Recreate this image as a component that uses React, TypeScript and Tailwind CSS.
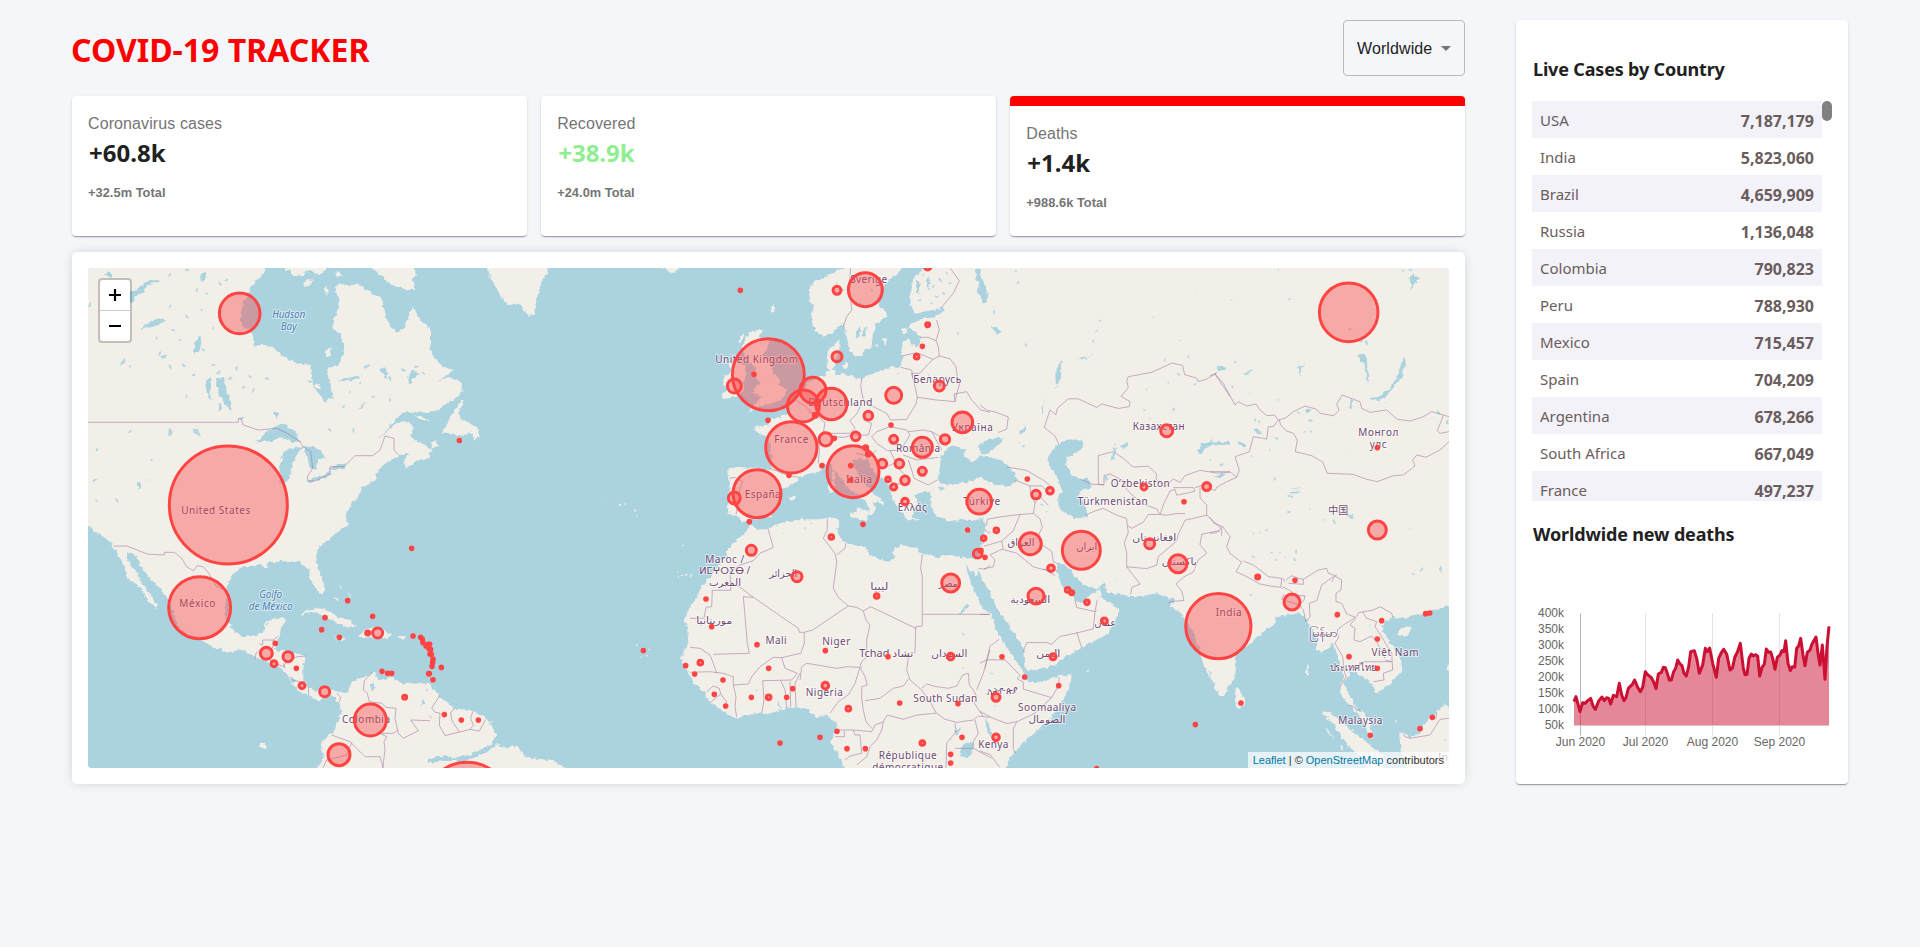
import React from "react";

const ui = "font-['Noto_Sans','Open_Sans',sans-serif]";
const arial = "font-['Liberation_Sans',Arial,sans-serif]";

/* ------------------------------------------------------------------ */
/* Map data: every sheet has its own origin and three units per pixel  */
/* ------------------------------------------------------------------ */

type Sheet = {
  x: number;
  y: number;
  sy: number;
  land: string[];
  water: string[];
  islands: string[];
  borders: string[];
  lakes: number[][];
  cases: number[][];
};

const northAmerica: Sheet = {
  x: 70,
  y: 250,
  sy: 1 / 3,
  land: ["0,0 1080,0 1080,812 0,812"],
  water: [
    "592,30 586,60 575,78 550,100 535,130 520,160 512,190 513,230 540,235 550,262 553,288 580,282 610,295 640,318 680,340 724,346 727,380 730,412 745,432 768,458 775,445 788,445 780,400 775,380 772,358 800,345 818,320 823,285 815,258 790,235 793,205 803,180 805,150 797,120 800,105 815,100 840,108 870,103 890,118 915,135 940,152 945,200 960,230 980,247 1005,230 1012,215 1020,185 1028,172 1040,190 1055,215 1085,240 1085,30",
    "920,570 950,540 985,500 1000,487 1040,485 1085,490 1085,598 1060,582 1040,577 1022,555 1030,535 1020,517 1000,514 980,522 955,540",
    "1085,622 1045,632 1012,650 1000,638 1020,612 985,615 970,625 940,645 922,665 915,690 880,710 862,740 840,770 828,790 830,815 1085,815",
    "556,577 590,545 600,540 625,525 650,520 660,535 680,545 690,575 672,576 650,570 630,560 610,575 580,572",
    "632,700 628,650 640,610 660,595 700,590 682,610 668,640 660,680 650,695",
    "700,588 735,592 755,605 768,625 745,625 736,660 720,655 712,625",
    "708,695 740,682 782,665 782,676 745,690 720,700",
    "778,656 800,646 828,640 826,653 790,661",
    "435,385 458,382 466,410 475,440 486,470 480,482 462,455 448,430 440,410",
    "408,390 420,380 424,410 418,425 428,450 420,452 412,420",
    "445,455 452,460 458,480 450,485",
    "178,125 195,122 215,105 240,90 262,88 270,95 245,100 228,115 212,132 195,140 186,158 178,155",
    "212,238 240,215 265,205 290,212 270,218 250,230",
    "372,285 390,255 396,270 390,300 372,308",
    "390,75 402,66 412,75 402,90 392,98",
    "105,72 115,64 128,75 118,82",
    "612,490 622,483 628,495 618,506",
    "200,700 208,695 216,710 210,717",
    "805,388 830,385 860,378 870,382 840,392 815,393",
    "930,360 945,352 955,370 948,385 938,375",
    "1012,390 1025,362 1048,370 1030,385 1024,400",
    "866,478 878,458 888,456 876,474",
  ],
  islands: [
    "640,30 645,62 660,62 672,78 700,75 705,60 735,66 750,76 778,50 780,30",
    "900,30 905,58 935,75 955,100 985,112 1020,120 1036,116 1026,92 1034,75 1030,30",
    "700,100 712,87 730,90 720,106 704,112",
    "762,112 772,105 776,125 768,135",
    "792,72 806,66 815,76 802,80",
    "925,35 945,70 975,80 990,60 980,35",
    "1002,640 1010,622 1040,605 1072,600 1060,622 1030,640 1010,652",
    "1036,496 1060,500 1076,512 1050,512",
    "728,408 745,402 755,412 740,418",
    "768,300 782,296 780,318 768,322",
  ],
  borders: [
    "54,517 505,517 505,505 513,506 520,525 565,540 620,535 655,552 690,575 700,590 722,605 728,655 712,680 714,692 735,693 780,672 780,650 822,650 855,617 908,617 930,600 945,558 960,562 972,565 972,600 985,614",
  ],
  lakes: [
    [352,60,6],[300,75,5],[380,120,5],[450,100,6],[410,130,4],[470,90,5],[300,170,5],[350,200,6],[310,240,5],[280,320,9],[270,310,6],[300,350,6],[340,345,6],[370,375,5],[160,335,9],[180,350,4],[400,300,5],[430,345,5],[445,368,7],[500,355,6],[540,380,5],[590,385,6],[520,412,5],[550,420,6],[350,440,4],[720,395,6],[890,350,8],[870,400,4],[960,385,7],[1000,360,6],[1040,350,6],[820,470,5],[850,540,6],[780,540,5],[910,440,5],[180,545,5],[300,548,11],[380,545,12],[245,630,4],[75,690,6],[80,600,5],[140,750,6],[80,752,4],[515,505,7],[60,165,6],[260,265,5],[275,215,5],[480,385,6],[840,425,4],[960,450,5],[1060,370,5],[230,690,3],[455,185,4],[430,235,4],[395,180,4],[330,270,4],
  ],
  cases: [[509,190,65],[475,765,181]],
};

const caribbean: Sheet = {
  x: 70,
  y: 520,
  sy: 1 / 3,
  land: [
    "0,-10 54,10 75,38 110,55 130,80 150,115 168,150 170,175 200,195 225,225 240,250 258,265 262,255 245,235 228,205 210,180 198,155 182,135 170,110 172,97 190,100 203,120 220,150 245,180 262,198 280,215 295,240 310,280 330,330 360,350 395,362 430,380 480,397 520,388 545,405 575,420 600,430 640,450 655,470 670,495 690,515 715,525 750,545 760,530 785,525 800,540 808,550 815,580 800,610 790,640 760,655 750,680 762,710 740,745 735,800 1082,800 1082,492 1050,490 1000,492 960,470 925,482 915,458 895,465 880,475 845,485 830,520 790,512 770,500 740,512 715,505 700,485 700,440 708,408 680,400 650,395 615,390 625,350 635,325 648,300 640,292 600,298 585,315 580,335 560,345 520,352 495,335 475,310 465,280 468,240 470,200 482,170 515,140 560,135 600,145 590,128 640,122 690,125 705,140 718,150 720,180 735,200 745,220 757,222 763,205 755,170 742,140 738,110 745,85 775,60 800,35 835,15 832,-10",
    "688,285 705,270 740,265 775,270 805,290 835,300 862,320 830,322 800,310 770,290 740,278 715,275 695,288",
    "862,350 882,330 915,322 945,333 965,345 940,355 900,352",
    "790,350 812,350 830,355 812,360",
    "983,348 1008,349 1004,357 985,356",
    "795,228 802,232 806,248 800,244",
    "808,195 815,203 812,210",
    "832,215 838,222 840,232",
    "568,672 582,672 588,684 575,686",
  ],
  water: ["900,495 910,488 918,500 910,516 901,508", "648,462 660,470 678,484 668,486", "1052,545 1060,538 1062,552 1054,555"],
  islands: [],
  borders: [
    "130,78 170,78 235,103 283,105 283,97 313,97 335,115 350,140 370,152 382,137 400,140 415,158 425,175 440,200 465,210",
    "568,372 578,374 578,360 610,360 625,348",
    "610,360 608,385",
    "555,418 558,400 575,385 608,388",
    "590,410 605,425 640,440 650,425 682,410 708,408",
    "645,445 640,430",
    "665,480 690,485",
    "715,500 716,525",
    "800,520 812,532 808,545",
    "905,458 883,482 880,510 892,520 898,545 935,550 948,562 978,565 975,595 985,640 1000,655 1045,632 1022,600 1080,602",
    "785,645 840,665 885,710 930,710 940,745",
    "930,640 950,650 942,665 945,690 938,745",
    "935,640 970,640 985,630",
    "758,745 770,720 830,705 845,668",
  ],
  lakes: [[110,150,2],[235,343,2],[600,680,3],[1070,510,4]],
  cases: [
    [389,263,97],[1025,85,8],[833,242,8],[765,293,8],[755,329,8],[808,352,8],[908,289,8],[893,339,10],[923,339,19],[1029,348,8],[1052,352,8],[1057,358,8],[1059,368,8],[1068,378,8],[1075,373,8],[1077,386,8],[1080,402,8],[616,370,8],[589,400,22],[654,410,19],[612,431,13],[679,445,8],[696,497,13],[764,515,19],[936,454,8],[953,460,8],[965,460,8],[1076,461,8],[1004,532,10],[901,600,52],[807,704,37],
  ],
};

const atlantic: Sheet = {
  x: 430,
  y: 250,
  sy: 540 / 1568,
  land: [
    "170,30 172,58 190,95 208,128 235,160 265,155 295,190 313,188 315,165 328,110 345,75 360,50 360,30",
    "690,30 697,52 720,65 735,66 750,52 752,30",
    "-4,275 10,310 35,335 70,350 50,362 25,382 60,370 95,380 98,410 80,430 50,445 25,465 -4,470",
    "95,435 75,460 60,490 38,530 70,533 100,540 125,530 133,555 140,540 150,548 142,515 115,500 90,490 85,475 102,437",
    "-4,590 10,575 28,572 18,552 -4,565",
    "-4,1262 25,1290 70,1333 120,1335 155,1350 180,1370 198,1410 180,1440 150,1465 200,1435 225,1445 260,1440 290,1475 330,1478 370,1482 405,1505 430,1550 -4,1550",
  ],
  water: ["-4,1480 30,1470 80,1476 130,1462 170,1440 185,1445 150,1466 110,1482 40,1484 -4,1490"],
  islands: [],
  borders: [
    "30,1293 5,1330 15,1342 30,1345 28,1380 45,1410 88,1400 65,1365 62,1342 72,1333",
    "128,1340 122,1360 130,1380 120,1392 88,1400",
    "167,1363 148,1397 120,1392",
    "-2,1352 5,1358",
  ],
  lakes: [[517,721,2],[570,740,4],[585,738,3],[615,756,4],[622,772,2],[760,858,3],[743,935,3],[745,950,3],[756,945,3],[768,943,4],[783,945,4],[620,1147,3],[658,1160,3],[650,1178,3],[633,1182,3]],
  cases: [
    [88,553,8],[-1,1145,8],[2,1160,8],[4,1174,8],[9,1188,8],[8,1198,8],[6,1209,8],[-2,1230,8],[9,1248,8],[34,1212,8],[43,1349,8],[94,1365,8],[145,1365,8],[111,1611,132],[640,1163,8],[767,1207,8],
  ],
};

const europe: Sheet = {
  x: 690,
  y: 250,
  sy: 1 / 3,
  land: [
    "200,240 218,240 208,262 238,272 230,300 218,312 242,345 256,375 270,390 268,405 292,420 275,450 240,462 205,470 175,487 185,470 200,455 218,440 190,430 195,410 210,400 195,380 200,350 180,340 165,320 158,290 168,262 182,248",
    "150,262 160,245 156,272 145,280",
    "245,172 252,165 252,180 246,192",
    "120,345 150,333 166,345 170,370 160,400 164,420 140,440 105,447 95,435 110,420 98,400 105,375 120,370",
    "470,30 462,54 430,68 400,85 375,95 358,122 360,150 372,170 362,200 368,225 380,247 400,257 425,250 442,235 458,220 465,235 468,265 478,300 495,318 515,318 525,300 545,290 548,255 556,222 592,200 588,185 568,170 562,140 575,112 600,88 625,70 640,30",
    "700,30 695,60 680,78 664,100 660,130 662,165 675,192 700,185 740,178 760,174 762,184 735,200 700,207 665,220 655,235 682,248 690,265 684,290 668,285 655,262 640,275 634,300 640,330 630,350 600,352 575,360 545,372 520,385 500,385 480,375 455,372 440,375 434,362 414,355 410,325 415,300 430,288 448,268 450,285 444,312 436,335 430,355 410,362 405,375 378,382 352,400 335,430 312,450 300,470 290,495 270,500 245,508 240,522 225,525 190,533 202,547 222,557 236,570 242,600 246,640 242,660 200,655 140,650 112,660 115,690 120,720 113,750 115,795 140,797 160,815 190,808 238,800 252,785 262,770 275,752 272,725 300,705 325,692 325,682 352,672 390,665 402,645 420,640 436,662 455,690 480,718 500,732 525,752 540,780 535,795 550,792 558,775 548,760 562,750 578,765 582,755 545,725 522,700 505,672 492,655 488,632 505,625 520,630 532,620 540,645 555,670 580,690 598,708 604,735 618,765 640,790 650,812 665,808 672,790 668,770 690,775 680,750 672,735 690,728 722,725 745,710 1000,715 1000,30",
    "480,790 510,784 538,784 530,812 505,806 482,800",
    "415,700 434,692 436,722 420,730",
    "426,668 434,660 436,688 428,690",
    "458,345 470,335 475,352 460,358",
    "556,286 564,282 562,292",
    "575,270 592,262 586,290",
    "636,240 650,232 655,245 640,256",
    "296,745 312,735 318,745 302,752",
    "735,712 722,730 720,750 728,775 740,800 900,815 900,690",
  ],
  water: [
    "750,650 752,618 775,592 800,588 830,602 820,615 845,637 872,622 910,627 950,646 975,671 982,692 960,708 920,702 870,680 835,697 790,705 750,700 745,678",
    "870,592 900,567 942,563 922,589 892,612 872,604",
    "855,54 870,60 868,82 885,100 893,130 888,158 872,145 862,122 872,112 858,85",
    "495,240 512,232 515,245 503,268 496,262",
    "520,238 530,230 526,255 518,262",
    "798,248 808,244 806,254",
    "712,80 722,100 718,120 708,100",
    "680,90 690,100 686,130 678,120",
    "742,715 758,712 762,718 748,722",
  ],
  islands: ["845,600 858,592 862,610 850,612"],
  borders: [
    "482,54 478,100 485,180 470,200 460,230",
    "780,54 808,92 790,130 752,175",
    "740,210 748,240 738,272 745,290 748,318",
    "690,262 715,262 738,272",
    "635,318 680,308 730,328 748,318",
    "748,318 780,326 798,350 802,380 812,392 800,430 795,455 740,450 682,442 675,410 665,370 690,370 712,345 730,328",
    "632,352 665,360 668,385",
    "515,385 512,410 520,450 550,470 590,490 602,510 650,508 678,462 682,442",
    "795,455 792,432 830,425 845,450 872,480 900,487",
    "480,512 500,492 515,460",
    "480,512 495,535 480,550 425,550 400,545",
    "355,485 385,500 405,518 400,548 385,560 388,600 385,640",
    "425,560 460,562 490,555 535,555 545,520 520,510",
    "545,560 560,545 600,530 650,540 660,555 632,600 592,602 560,580 545,560",
    "655,545 700,540 725,545 755,600",
    "640,615 680,630 745,622",
    "600,602 612,625 620,650 650,680 658,705",
    "655,630 665,660 672,685 715,705 742,690",
    "725,545 748,558 770,590",
    "240,655 290,675 325,682",
    "118,685 135,682 158,695 148,720 150,745 138,792",
    "320,452 345,468 370,490",
    "565,655 590,650 612,640",
    "500,610 540,620 560,600",
    "590,685 612,700 650,705",
  ],
  lakes: [[460,120,4],[510,160,4],[440,100,3],[545,120,4],[560,100,4],[690,150,5],[730,110,5],[750,90,6],[740,140,5],[725,160,4],[700,75,4],[770,70,4],[760,130,5],[780,100,4],[625,370,3],[715,378,3],[335,738,4],[285,755,3],[560,610,2],[705,760,4],[690,790,4],[712,785,4]],
  cases: [
    [151,121,8],[441,121,16],[526,119,55],[713,50,14],[713,224,10],[697,289,8],[680,320,11],[748,408,19],[235,374,112],[192,373,8],[133,408,25],[441,320,19],[369,421,43],[340,468,52],[424,462,51],[376,496,10],[611,436,28],[535,497,17],[603,525,8],[817,517,35],[765,568,18],[234,511,8],[304,592,81],[407,568,24],[433,565,8],[497,559,17],[611,568,16],[697,592,34],[527,593,10],[535,612,10],[577,641,17],[628,641,17],[697,664,16],[489,665,82],[482,647,8],[482,690,8],[396,647,8],[297,676,8],[594,688,11],[645,691,17],[611,711,13],[645,755,14],[201,731,76],[133,744,22],[868,755,41],
  ],
};

const africa: Sheet = {
  x: 690,
  y: 510,
  sy: 1 / 3,
  land: [
    "180,45 205,58 230,58 270,40 330,28 390,28 420,22 448,32 440,60 455,95 470,100 530,115 540,135 595,155 612,145 610,120 635,105 680,115 700,132 740,142 780,135 830,145 900,150 900,800 478,800 465,774 450,745 430,710 422,690 440,660 437,635 420,625 412,615 380,625 350,595 310,590 270,600 235,612 195,610 138,625 100,605 60,575 40,545 10,515 -10,480 -28,446 -5,400 -8,360 -18,325 -5,300 18,263 35,230 65,195 105,140 120,108 165,72",
    "733,-60 728,-20 738,0 752,20 770,30 800,35 830,20 855,22 888,28 890,50 878,90 868,130 850,158 900,165 900,-60",
    "820,62 845,55 838,68 824,68",
    "655,22 690,28 672,33",
    "500,-8 528,2 525,20 505,8",
  ],
  water: [
    "826,163 840,178 858,198 867,178 872,200 900,245 900,310 880,300 850,235 836,200",
    "812,712 830,695 850,697 848,722 832,745 814,735",
    "885,625 895,640 905,680 893,670",
    "792,662 810,655 806,668 795,680",
    "804,315 815,300 832,280 834,290 818,308",
    "262,570 270,580 276,600 268,590",
  ],
  islands: [],
  borders: [
    "235,58 242,85 250,112 210,130 190,152 150,165 120,185 122,241 67,241 65,290 48,292 42,325 0,325",
    "122,215 150,232 190,262 325,355 328,367 343,367 368,360 475,288 500,292 520,303",
    "190,262 160,260 172,400 178,430 70,433",
    "343,367 343,400 332,430 300,437 275,443",
    "412,25 412,60 400,85 435,130 440,155 430,235 445,262 475,288",
    "467,100 465,115 440,135",
    "697,132 692,175 697,200 697,313 900,313",
    "697,313 697,348 677,350 677,355 542,290 520,303",
    "520,303 528,330 540,345 530,390 530,440 515,455 510,470",
    "677,355 675,428 657,430 650,480 660,510",
    "330,510 335,470 350,460 400,468 440,475 470,470 510,472",
    "510,472 495,520 475,555 445,575 420,610",
    "510,472 525,500 532,525 515,530 515,565 520,600 528,635 545,655",
    "525,572 570,565 610,535 640,528 655,508",
    "660,510 695,540 720,575 738,608",
    "545,665 555,645 580,635 592,615 640,628 680,615 738,610",
    "738,608 765,628 800,637",
    "695,535 710,522 740,530 775,535 800,528 818,495 835,490 838,525 850,540 860,560",
    "860,540 880,490 900,420",
    "850,575 880,620 900,622",
    "800,637 850,630 865,618 880,620",
    "855,630 865,670 850,695 850,715 795,715",
    "795,640 798,665 770,700 768,774",
    "850,715 905,745",
    "440,660 490,660 545,665",
    "435,680 463,680 463,662",
    "490,660 495,675 510,675 515,730 480,738 465,750",
    "580,635 575,660 560,690 540,710 530,740 500,765",
    "0,412 30,415 60,435 68,455 80,490",
    "0,487 60,485 100,490 130,500 130,525 138,560 135,590 140,622",
    "130,525 175,522 185,500 210,470 250,442 275,443 285,475 322,490 305,510 218,512 222,570 215,610",
    "272,512 285,540 290,595",
    "300,515 302,590",
    "330,490 315,520 318,590",
    "50,545 70,528 88,535 92,552 60,578",
    "92,552 110,575 105,590",
    "865,175 885,178 900,165",
    "885,60 900,70",
  ],
  lakes: [[365,40,3],[280,70,2],[345,55,3],[820,372,4],[820,475,3],[200,540,3],[515,472,3],[345,520,2],[230,240,1],[780,265,2]],
  cases: [
    [178,35,8],[184,121,19],[424,81,11],[519,43,8],[833,60,8],[881,85,11],[863,131,17],[872,122,9],[885,142,8],[321,200,19],[48,267,8],[560,258,11],[782,219,31],[65,350,8],[201,404,8],[406,422,8],[594,440,8],[782,440,14],[31,458,11],[14,492,8],[236,475,8],[99,510,8],[406,527,14],[73,553,8],[184,562,8],[236,562,11],[290,562,8],[308,536,8],[107,588,8],[475,596,11],[629,579,8],[804,581,8],[441,664,8],[390,682,8],[270,699,8],[471,716,8],[526,716,8],[697,699,11],[816,682,8],[782,733,8],[782,759,8],
  ],
};

const centralAsia: Sheet = {
  x: 980,
  y: 250,
  sy: 540 / 1568,
  land: ["0,0 750,0 750,1560 0,1560"],
  water: [
    "-2,945 35,1005 50,1040 75,1070 100,1110 130,1155 133,1210 145,1222 200,1213 230,1200 260,1180 305,1155 350,1132 385,1115 395,1090 420,1050 402,1030 362,1010 360,982 350,990 330,1000 310,1022 285,1020 275,992 262,985 258,1000 240,960 228,930 232,905 258,918 285,945 305,968 350,985 372,965 378,990 410,998 450,1005 480,1005 530,997 560,1010 585,1015 570,1035 600,1050 620,1080 640,1110 655,1150 670,1200 690,1250 710,1290 725,1297 752,1275 752,1560 50,1560 75,1503 90,1475 120,1440 160,1405 200,1370 240,1325 268,1270 275,1235 235,1237 200,1248 160,1258 135,1248 140,1235 120,1210 95,1175 70,1140 45,1095 30,1040 15,1015 -2,990",
    "-2,775 12,780 15,810 8,850 -2,872",
    "-2,600 40,603 80,622 105,648 112,670 90,685 50,682 20,668 -2,655",
    "-2,568 30,548 72,544 52,568 22,592 -2,588",
    "235,565 260,550 305,550 312,570 290,590 262,600 258,620 272,650 300,665 325,662 335,690 305,697 298,715 318,745 322,775 290,780 255,765 235,745 235,715 248,700 240,680 220,640 200,608 215,585",
    "655,580 665,563 700,556 752,558 752,565 700,564 675,573 668,592 658,592",
    "395,610 400,580 412,570 406,590 400,612",
    "420,570 440,558 446,570 430,578",
    "370,665 382,655 388,665 376,674",
    "0,70 8,90 8,115 20,130 20,152 8,150 -2,125",
    "35,220 62,230 65,240 52,246",
    "118,532 135,510 140,520 125,535",
    "226,360 240,325 250,322 240,345 240,375 228,400",
    "185,470 192,430 188,480",
    "292,316 320,312 338,305 320,318",
    "572,465 585,458 582,470",
    "700,655 725,650 735,655 712,662",
    "712,345 735,338 742,345 720,352",
    "15,1330 20,1370 28,1392 20,1380",
  ],
  islands: ["310,1222 328,1221 325,1225"],
  borders: [
    "237,565 225,540 193,515 210,465 228,478 232,460 265,432 295,432 350,457 365,447 415,460 448,455 450,440 423,425 445,400 440,380 445,368 515,355 545,342 575,328 608,335 614,362 650,372 655,382 680,375 705,360 750,425",
    "0,450 20,465 45,470 85,485 80,520 55,530",
    "80,630 140,640 165,655 190,668 215,688",
    "105,668 150,685 185,685 200,700",
    "150,685 152,710 165,735 160,765 180,780 187,805 175,830 185,855 215,875 220,905 235,912",
    "165,735 180,715 205,742",
    "20,800 22,782 60,775 120,768 160,765",
    "120,768 100,815 65,845 30,855 12,860",
    "65,845 70,870 110,880 160,920 190,928 230,930",
    "12,925 40,920 45,900 30,885 68,868",
    "372,682 355,680 355,597 400,585 430,605 460,630 505,628 530,650 528,665 555,690 580,665 600,675 615,655 660,640 715,648 750,645",
    "300,665 335,680 372,682 372,655 390,650 430,670 440,695 460,715 495,740 530,752 538,765",
    "315,770 345,758 370,750 410,770 440,780 442,800 455,808 490,790 505,768 540,768 560,770 590,765 615,765",
    "442,800 445,820 433,850 440,880 440,920",
    "440,920 500,925 530,915 535,890 560,870 590,845 595,825 615,785 680,770",
    "440,920 460,945 480,970 455,980 452,1000",
    "565,1025 575,1020 612,1018 605,990 588,970 610,950 640,935 655,900 680,880 660,855 665,825 720,815",
    "540,768 552,735 570,700 585,695 590,712 625,705 645,700 640,690 600,690 580,690",
    "660,690 660,720 680,740 680,770 725,810 725,830",
    "645,690 680,680 695,690",
    "130,1165 140,1140 200,1140 215,1145 240,1122 290,1112 340,1100 345,1050 350,1045",
    "290,1110 305,1155",
    "285,1018 290,1038 345,1050 352,1015",
    "0,1058 28,1058",
    "15,1215 20,1190 30,1150 58,1130",
    "0,1200 20,1190 75,1190 100,1215 120,1235",
    "120,1235 112,1245 130,1255 130,1275 215,1300 165,1345 110,1370 80,1375 40,1360 0,1340",
    "215,1300 237,1262 237,1240",
    "110,1370 100,1390 100,1450 107,1460",
    "0,1455 30,1465 60,1503",
    "190,925 225,945",
  ],
  lakes: [[108,62,4],[115,95,5],[42,180,5],[137,275,5],[360,205,4],[350,235,4],[340,265,4],[520,195,3],[650,125,2],[600,263,3],[555,320,4],[625,310,4],[595,360,5],[645,390,4],[565,385,3],[500,405,3],[493,465,4],[510,490,3],[375,600,2],[405,565,3],[680,715,2],[225,400,3],[130,570,4],[118,560,3],[405,958,2],[35,1230,4],[45,1325,3],[510,940,2],[690,610,3],[185,740,4],[200,760,3]],
  cases: [
    [142,665,8],[168,710,17],[210,699,14],[49,814,11],[151,853,37],[213,924,14],[304,872,61],[263,987,11],[275,995,10],[321,1023,11],[168,1005,28],[373,1077,13],[219,1181,13],[66,1181,8],[134,1240,8],[236,1265,8],[48,1299,16],[48,1415,14],[646,1378,8],[350,1506,8],[492,688,13],[560,525,22],[680,687,16],[612,731,8],[509,853,19],[594,911,31],[715,1092,102],
  ],
};

const eastAsia: Sheet = {
  x: 1210,
  y: 250,
  sy: 1 / 3,
  land: ["0,0 780,0 780,812 0,812"],
  water: [
    "480,445 510,440 540,415 550,395 565,375 572,345 580,325 587,325 583,355 575,382 550,410 525,445 490,452",
    "418,475 422,450 430,450 426,478",
    "285,480 292,473 301,482 293,490",
    "0,574 30,578 60,574 60,582 30,585 0,580",
    "85,577 98,575 112,592 100,596",
    "14,680 28,672 48,674 30,684 16,684",
    "130,540 140,535 156,548 145,550",
    "95,378 125,355 130,358 108,375",
    "440,320 455,310 468,316 468,345 478,378 474,400 465,360 460,335 452,340 448,322",
    "595,88 605,80 615,70 628,90 612,98 606,118 600,95",
    "262,352 285,340 270,355 272,380 264,362",
    "20,352 40,350 38,360 25,362",
    "64,405 72,408 66,418",
    "245,715 275,712 260,716",
    "235,730 255,722 275,726 250,730",
    "228,742 248,736 245,740",
    "708,520 717,508 717,515 712,525",
    "412,795 425,795 430,805 415,802",
  ],
  islands: [],
  borders: [
    "0,378 20,368 15,372 40,400 75,465 85,455 110,468 138,462 150,480 170,497 193,495 205,510 225,505 250,485 285,468 320,478 330,490 372,497 387,480 380,462 397,435 450,455 455,475 480,487 530,480 562,508 600,513 640,500 665,485 717,500",
    "208,510 212,525 228,542 250,550 262,570 256,605 305,617 338,636 352,670 430,673 470,688 502,695 550,677 580,675 615,648 608,630 620,615 648,622 690,600 717,575",
    "700,497 682,542 690,550 717,545",
    "205,510 190,530 175,530 170,567 130,560 118,605 75,620 88,660 80,682 50,695 20,712 15,722 0,715",
    "0,665 60,665 80,682",
  ],
  lakes: [[65,150,3],[76,336,4],[205,450,3],[265,488,4],[302,512,6],[285,545,4],[302,545,4],[370,520,2],[200,565,5],[34,644,6],[195,687,5],[402,602,2],[428,678,2],[236,786,5],[300,776,3],[180,600,3],[125,618,3],[527,458,2],[238,148,4],[205,60,3],[685,488,6],[600,60,5],[580,62,4],[455,270,6],[470,278,6],[420,238,5],[120,430,2],[135,510,5],[148,515,4]],
  cases: [[416,187,92],[502,593,8]],
};

const southAsia: Sheet = {
  x: 1210,
  y: 510,
  sy: 1 / 3,
  land: ["0,0 780,0 780,800 0,800"],
  water: [
    "-2,480 10,520 30,560 40,558 58,530 75,502 78,470 74,440 100,415 130,392 160,365 192,345 198,322 225,316 270,310 285,322 300,350 320,375 318,420 340,427 358,410 368,400 380,430 390,470 402,500 390,530 395,560 408,572 430,600 455,625 465,650 475,672 490,685 486,665 478,635 465,610 435,590 420,560 408,540 400,515 415,500 420,482 435,488 460,500 482,518 500,550 540,520 572,490 575,450 545,405 520,365 515,345 530,330 548,322 580,325 640,312 690,295 780,262 780,805 -2,805",
  ],
  islands: [
    "565,365 585,350 603,350 600,370 580,382 565,375",
    "78,532 88,540 104,565 106,580 90,597 78,592 74,560",
    "336,603 370,612 410,650 450,680 480,705 520,735 525,805 490,805 450,745 420,710 395,680 370,640 340,615",
    "568,668 580,665 600,685 625,670 650,635 680,605 705,582 720,592 780,600 780,805 605,805 580,740 570,700",
    "292,465 297,470 292,500 288,495",
    "345,650 352,655 375,688 365,680",
    "390,705 400,715 402,722 392,715",
    "552,630 560,628 560,636",
    "713,462 720,458 720,482 713,480",
  ],
  borders: [
    "0,22 12,40 38,50 60,80 50,110 60,130 95,157",
    "0,70 20,68 38,50",
    "95,155 78,185 110,200 150,222 180,228 213,232 215,205 175,200 150,180 130,165 100,153",
    "228,210 245,197 265,205 280,208 280,223 235,220",
    "215,235 222,232 245,245 240,257 285,257 282,270 268,285 215,268 222,252",
    "268,285 280,300 288,335 300,320 298,280 320,272 335,225 370,200",
    "218,205 225,215",
    "280,208 325,180 350,175 355,190 370,195 395,210 393,240 378,250 378,275 395,280 410,312 437,322",
    "437,322 400,345 382,360 385,385 375,400 398,440 402,480 408,500 390,530",
    "437,325 420,345 435,355 432,390 450,395 485,378 500,395 515,425",
    "440,320 445,308 490,300 510,290 545,310 548,320",
    "458,305 470,325 500,335 495,350 510,372 545,430 548,480 520,490 522,510 490,515",
    "458,455 545,455 525,450",
    "415,585 430,588 440,602 450,598",
    "580,672 585,680 600,685 660,675 690,628 717,625",
    "672,628 678,625 680,605",
    "380,195 372,200 366,215",
  ],
  lakes: [[185,128,4],[210,128,3],[258,125,5],[254,148,5],[198,150,4],[170,60,4],[150,68,3],[130,70,3],[130,140,4],[225,142,3],[340,30,3],[372,35,6],[420,18,8],[600,55,2],[635,178,6],[692,178,7],[610,193,4],[122,255,4],[480,345,3],[365,672,3],[705,690,3]],
  cases: [[502,60,31],[143,201,10],[255,211,8],[246,276,28],[382,314,8],[515,332,8],[502,387,8],[417,440,8],[502,475,8],[647,311,8],[659,309,8],[93,579,8],[667,622,8],[630,656,8],[481,676,8]],
};

const sheets: Sheet[] = [northAmerica, caribbean, atlantic, europe, africa, centralAsia, eastAsia, southAsia];

const toPixels = (s: Sheet, points: string) =>
  points
    .split(" ")
    .map((p) => {
      const [x, y] = p.split(",").map(Number);
      return `${(s.x + x / 3).toFixed(1)},${(s.y + y * s.sy).toFixed(1)}`;
    })
    .join(" ");

const lakeShape = (s: Sheet, lake: number[], i: number) => {
  const [x, y, r] = lake;
  const turn = (i * 2.4) % 3.14;
  const pts: string[] = [];
  for (let k = 0; k < 7; k++) {
    const a = (k / 7) * Math.PI * 2;
    const wobble = 0.65 + (((i * 7 + k * 5) % 9) / 9) * 0.8;
    const px = Math.cos(a) * r * wobble * 1.3;
    const py = Math.sin(a) * r * wobble * 0.6;
    const qx = px * Math.cos(turn) - py * Math.sin(turn);
    const qy = px * Math.sin(turn) + py * Math.cos(turn);
    pts.push(`${(s.x + (x + qx) / 3).toFixed(1)},${(s.y + y * s.sy + qy / 3).toFixed(1)}`);
  }
  return pts.join(" ");
};

type Label = [string, number, number, number?];

// text, centre x, centre y, drawn width
const latinLabels: Label[] = [
  ["United States", 215.7, 510, 69],
  ["México", 197.3, 603.5, 36],
  ["Colombia", 366, 719, 48],
  ["United Kingdom", 756.7, 359.3, 83],
  ["Sverige", 868.7, 279.5, 37],
  ["Deutschland", 840.3, 402, 64],
  ["France", 791.3, 439.5, 34],
  ["España", 762.7, 494, 36],
  ["Italia", 859, 479.5, 26],
  ["România", 918, 448.5, 44],
  ["Беларусь", 937.3, 379.5, 48],
  ["Україна", 972.3, 427, 41],
  ["Ελλάς", 912.3, 507.5, 29],
  ["Türkiye", 981.7, 501, 37],
  ["Maroc /", 724.7, 559, 39],
  ["Mali", 776, 640.5, 21],
  ["Niger", 836.3, 641, 28],
  ["Nigeria", 824.3, 692, 37],
  ["South Sudan", 945.3, 698.5, 64],
  ["République", 907.7, 755, 58],
  ["démocratique", 907.7, 767.3, 71],
  ["Казахстан", 1158.7, 426.3, 52],
  ["O‘zbekiston", 1140.3, 483.5, 59],
  ["Türkmenistan", 1112.7, 501.5, 70],
  ["Soomaaliya", 1047, 707.5, 58],
  ["Kenya", 993.3, 744.5, 30],
  ["India", 1228.7, 612.3, 26],
  ["Монгол", 1378.3, 432.5, 40],
  ["улс", 1378.3, 444.5, 17],
  ["Việt Nam", 1395, 652.3, 47],
  ["Malaysia", 1360.3, 720.7, 44],
];

const otherLabels: Label[] = [
  ["ⵍⵎⵖⵔⵉⴱ /", 724.7, 571, 51],
  ["المغرب", 725, 583, 32],
  ["الجزائر", 783.3, 574, 28],
  ["موريتانيا", 714.3, 621, 36],
  ["ليبيا", 879.3, 586.5, 18],
  ["مصر", 948.3, 583.5, 19],
  ["Tchad تشاد", 886.3, 653.5, 54],
  ["السودان", 949.3, 654, 36],
  ["ايران", 1086.7, 547, 21],
  ["العراق", 1021, 542.5, 27],
  ["افغانستان", 1154.3, 538, 44],
  ["پاکستان", 1179.3, 562, 35],
  ["السعودية", 1030.3, 600, 40],
  ["عمان", 1105.3, 623, 22],
  ["اليمن", 1048.3, 653.5, 24],
  ["ኢትዮጵያ", 1002, 691, 31],
  ["الصومال", 1047, 720, 37],
  ["中国", 1338.3, 511, 20],
  ["မြန်မာ", 1323.3, 634, 28],
  ["ประเทศไทย", 1353.3, 668, 47],
  ["In", 1443, 757.5, 10],
];

const WorldMap = () => (
  <svg viewBox="88 268 1361 500" className="block h-full w-full">
    <defs>
      <filter id="coast" x="0" y="0" width="1" height="1" colorInterpolationFilters="sRGB">
        <feTurbulence type="fractalNoise" baseFrequency="0.22" numOctaves="2" seed="4" result="n" />
        <feDisplacementMap in="SourceGraphic" in2="n" scale="5" xChannelSelector="R" yChannelSelector="G" />
      </filter>
    </defs>
    <rect x="60" y="240" width="1420" height="560" fill="#aad3df" />
    <g filter="url(#coast)">
      <rect x="60" y="240" width="1420" height="560" fill="#aad3df" />
      {sheets.map((s) => s.land.map((p) => <polygon key={p} points={toPixels(s, p)} fill="#f2efe9" />))}
      {sheets.map((s) => s.water.map((p) => <polygon key={p} points={toPixels(s, p)} fill="#aad3df" />))}
      {sheets.map((s) => s.islands.map((p) => <polygon key={p} points={toPixels(s, p)} fill="#f2efe9" />))}
    </g>
    {sheets.map((s) =>
      s.lakes.map((l, i) => (
        <polygon key={`${s.x}-${s.y}-${i}`} points={lakeShape(s, l, i)} fill={s === atlantic ? "#f2efe9" : "#b4d8e1"} />
      ))
    )}
    <g fill="none" stroke="#9d76a0" strokeOpacity="0.62" strokeWidth="0.9" strokeLinejoin="round">
      {sheets.map((s) => s.borders.map((p) => <polyline key={p} points={toPixels(s, p)} />))}
    </g>
    <g
      textAnchor="middle"
      fill="#6f4a72"
      stroke="#ffffff"
      strokeOpacity="0.6"
      strokeWidth="2"
      strokeLinejoin="round"
      paintOrder="stroke"
      fontSize="10"
    >
      <g fontFamily="'Noto Sans', sans-serif">
        {latinLabels.map(([t, x, y, w]) => (
          <text key={t} x={x} y={y + 3.6} textLength={w}>
            {t}
          </text>
        ))}
      </g>
      <g fontFamily="'Noto Sans', 'DejaVu Sans', 'Noto Sans CJK SC', sans-serif">
        {otherLabels.map(([t, x, y, w]) => (
          <text key={t} x={x} y={y + 3.2} textLength={w} lengthAdjust="spacingAndGlyphs">
            {t}
          </text>
        ))}
      </g>
      <g fontFamily="'Noto Sans', sans-serif" fontStyle="italic" fill="#4f7fb5" strokeOpacity="0.5">
        <text x="288.7" y="317.5" textLength="33">Hudson</text>
        <text x="288.7" y="329.5" textLength="16">Bay</text>
        <text x="270.7" y="598.3" textLength="23">Golfo</text>
        <text x="270.7" y="610.2" textLength="44">de México</text>
      </g>
    </g>
    <g fill="#fb4443" fillOpacity="0.4" stroke="#ff4443" strokeWidth="3">
      {sheets.map((s) =>
        s.cases.map(([x, y, r], i) => (
          <circle key={`${s.x}-${s.y}-${i}`} cx={s.x + x / 3} cy={s.y + y * s.sy} r={Math.max(r / 3 - 1.35, 1.25)} />
        ))
      )}
    </g>
  </svg>
);

/* ------------------------------------------------------------------ */
/* Line chart                                                          */
/* ------------------------------------------------------------------ */

const history =
  "222,905 228,890 240,935 248,908 256,910 264,901 272,895 279,918 286,928 296,903 306,891 313,902 320,893 326,895 332,912 340,886 350,890 358,850 365,885 372,902 378,893 385,865 397,853 404,840 413,862 421,875 428,862 436,815 442,823 454,833 462,848 468,866 475,822 484,817 490,802 496,803 502,820 508,840 514,840 521,815 527,805 533,780 540,792 546,797 552,820 559,828 566,800 572,755 583,752 590,775 598,820 608,795 616,745 622,755 629,744 638,790 649,832 656,775 664,758 671,748 680,762 690,810 697,805 705,770 712,757 721,730 730,805 735,824 741,823 747,775 754,762 760,768 767,764 773,768 779,828 786,803 793,792 799,747 806,757 812,756 818,775 825,808 832,772 840,765 846,752 852,755 857,722 864,790 871,812 877,800 884,802 890,745 896,738 902,715 909,765 915,797 922,757 930,750 936,732 948,711 954,760 960,795 967,735 975,838 981,740 987,679";

const Chart = () => {
  const pts = history.split(" ").map((p) => p.split(",").map(Number));
  const line = pts.map(([x, y]) => `${((x - 96) / 3).toFixed(2)},${((y - 600) / 3).toFixed(2)}`).join(" ");
  const months: [string, number][] = [
    ["Jun 2020", 48.5],
    ["Jul 2020", 113.5],
    ["Aug 2020", 180.5],
    ["Sep 2020", 247.5],
  ];
  return (
    <svg viewBox="0 0 300 150" className="block h-[150px] w-[300px] overflow-visible">
      {months.map(([m, x], i) => (
        <line key={m} x1={x} x2={x} y1="13.5" y2="135.5" stroke={i === 0 ? "#b5b5b5" : "#e3e3e3"} />
      ))}
      <line x1="42" x2="297" y1="125.5" y2="125.5" stroke="#e0e0e0" />
      <polygon points={`42,125.3 ${line} 297,125.3`} fill="rgba(204,16,52,0.5)" />
      <polyline points={line} fill="none" stroke="#cc1034" strokeWidth="3" strokeLinejoin="round" />
      <g fontFamily="'Liberation Sans', Arial, sans-serif" fontSize="12" fill="#666666">
        {["400k", "350k", "300k", "250k", "200k", "150k", "100k", "50k"].map((t, i) => (
          <text key={t} x="32" y={17 + i * 16} textAnchor="end">
            {t}
          </text>
        ))}
        {months.map(([m, x]) => (
          <text key={m} x={x} y="146" textAnchor="middle">
            {m}
          </text>
        ))}
      </g>
    </svg>
  );
};

/* ------------------------------------------------------------------ */

const paper =
  "rounded bg-white shadow-[0_2px_1px_-1px_rgba(0,0,0,0.2),0_1px_1px_0_rgba(0,0,0,0.14),0_1px_3px_0_rgba(0,0,0,0.12)]";

const countries: [string, string][] = [
  ["USA", "7,187,179"],
  ["India", "5,823,060"],
  ["Brazil", "4,659,909"],
  ["Russia", "1,136,048"],
  ["Colombia", "790,823"],
  ["Peru", "788,930"],
  ["Mexico", "715,457"],
  ["Spain", "704,209"],
  ["Argentina", "678,266"],
  ["South Africa", "667,049"],
  ["France", "497,237"],
];

const InfoBox = ({ title, cases, total, green, active }: { title: string; cases: string; total: string; green?: boolean; active?: boolean }) => (
  <div className={`${paper} h-[140px] flex-1 overflow-hidden ${active ? "border-t-[10px] border-[#ff0000]" : ""}`}>
    <div className="px-4 pt-4">
      <p className={`${arial} text-[16px] leading-6 tracking-[0.1px] text-[#757575]`}>{title}</p>
      <h2 className={`${ui} pl-px pt-px text-[24px] font-bold leading-8 ${green ? "text-[#90ee90]" : "text-[#212121]"}`}>{cases}</h2>
      <p className={`${arial} mt-3 text-[12.8px] font-bold leading-6 tracking-[0.05px] text-[#757575]`}>{total}</p>
    </div>
  </div>
);

export default function App() {
  return (
    <div className="flex h-[947px] items-start bg-[#f5f6fa] pl-[72px] pt-5">
      <div className="w-[1393px]">
        <div className="mb-5 flex h-14 items-center justify-between">
          <h1 className={`${ui} -ml-px pt-1 text-[32px] font-bold text-[#ff0000]`}>COVID-19 TRACKER</h1>
          <div className={`${arial} flex h-14 w-[122px] items-center justify-between rounded border border-[#babbbe] px-[13px] text-[16px] text-[#212121]`}>
            <span className="pt-0.5 tracking-[0.1px]">Worldwide</span>
            <svg width="10" height="5" viewBox="0 0 10 5">
              <path d="M0 0h10L5 5z" fill="#757575" />
            </svg>
          </div>
        </div>

        <div className="flex gap-[14.5px]">
          <InfoBox title="Coronavirus cases" cases="+60.8k" total="+32.5m Total" />
          <InfoBox title="Recovered" cases="+38.9k" total="+24.0m Total" green />
          <InfoBox title="Deaths" cases="+1.4k" total="+988.6k Total" active />
        </div>

        <div className="mt-4 h-[532px] rounded-[5px] bg-white p-4 shadow-[0_0_12px_-2px_rgba(0,0,0,0.2)]">
          <div className="relative h-[500px] w-[1361px] overflow-hidden rounded">
            <WorldMap />
            <div className="absolute left-2.5 top-2.5 flex flex-col rounded border-2 border-black/20 bg-clip-padding">
              <div className="flex h-[31px] w-[30px] items-center justify-center rounded-t-sm border-b border-[#cccccc] bg-white">
                <svg width="12" height="12" viewBox="0 0 12 12">
                  <path d="M6 0v12M0 6h12" stroke="#000" strokeWidth="2.2" />
                </svg>
              </div>
              <div className="flex h-[30px] w-[30px] items-center justify-center rounded-b-sm bg-white">
                <svg width="12" height="12" viewBox="0 0 12 12">
                  <path d="M0 6h12" stroke="#000" strokeWidth="2.2" />
                </svg>
              </div>
            </div>
            <div className={`${arial} absolute bottom-0 right-0 h-4 whitespace-nowrap bg-white/70 px-[5px] text-[11px] leading-4 text-[#333333]`}>
              <span className="text-[#0078a8]">Leaflet</span> | © <span className="text-[#0078a8]">OpenStreetMap</span> contributors
            </div>
          </div>
        </div>
      </div>

      <div className={`${paper} ml-[51px] h-[764px] w-[332px] px-4 pt-[35px]`}>
        <h3 className={`${ui} pl-px text-[18px] font-bold leading-7 tracking-[-0.17px] text-[#212121]`}>Live Cases by Country</h3>
        <div className="mt-[18px] flex h-[400px] overflow-hidden">
          <div className={`${ui} w-[290px] text-[15px] text-[#6a5d5d]`}>
            {countries.map(([name, n]) => (
              <div key={name} className="flex h-[37px] items-center justify-between pl-2 pr-2 pt-0.5 odd:bg-[#f3f2f8]">
                <span>{name}</span>
                <strong className="text-[16px] font-bold">{n}</strong>
              </div>
            ))}
          </div>
          <div className="h-5 w-2.5 rounded-full bg-[#808080]" />
        </div>
        <h3 className={`${ui} pl-px pt-[19px] text-[18px] font-bold leading-7 tracking-[-0.14px] text-[#212121]`}>Worldwide new deaths</h3>
        <div className="mt-[52px]">
          <Chart />
        </div>
      </div>
    </div>
  );
}
